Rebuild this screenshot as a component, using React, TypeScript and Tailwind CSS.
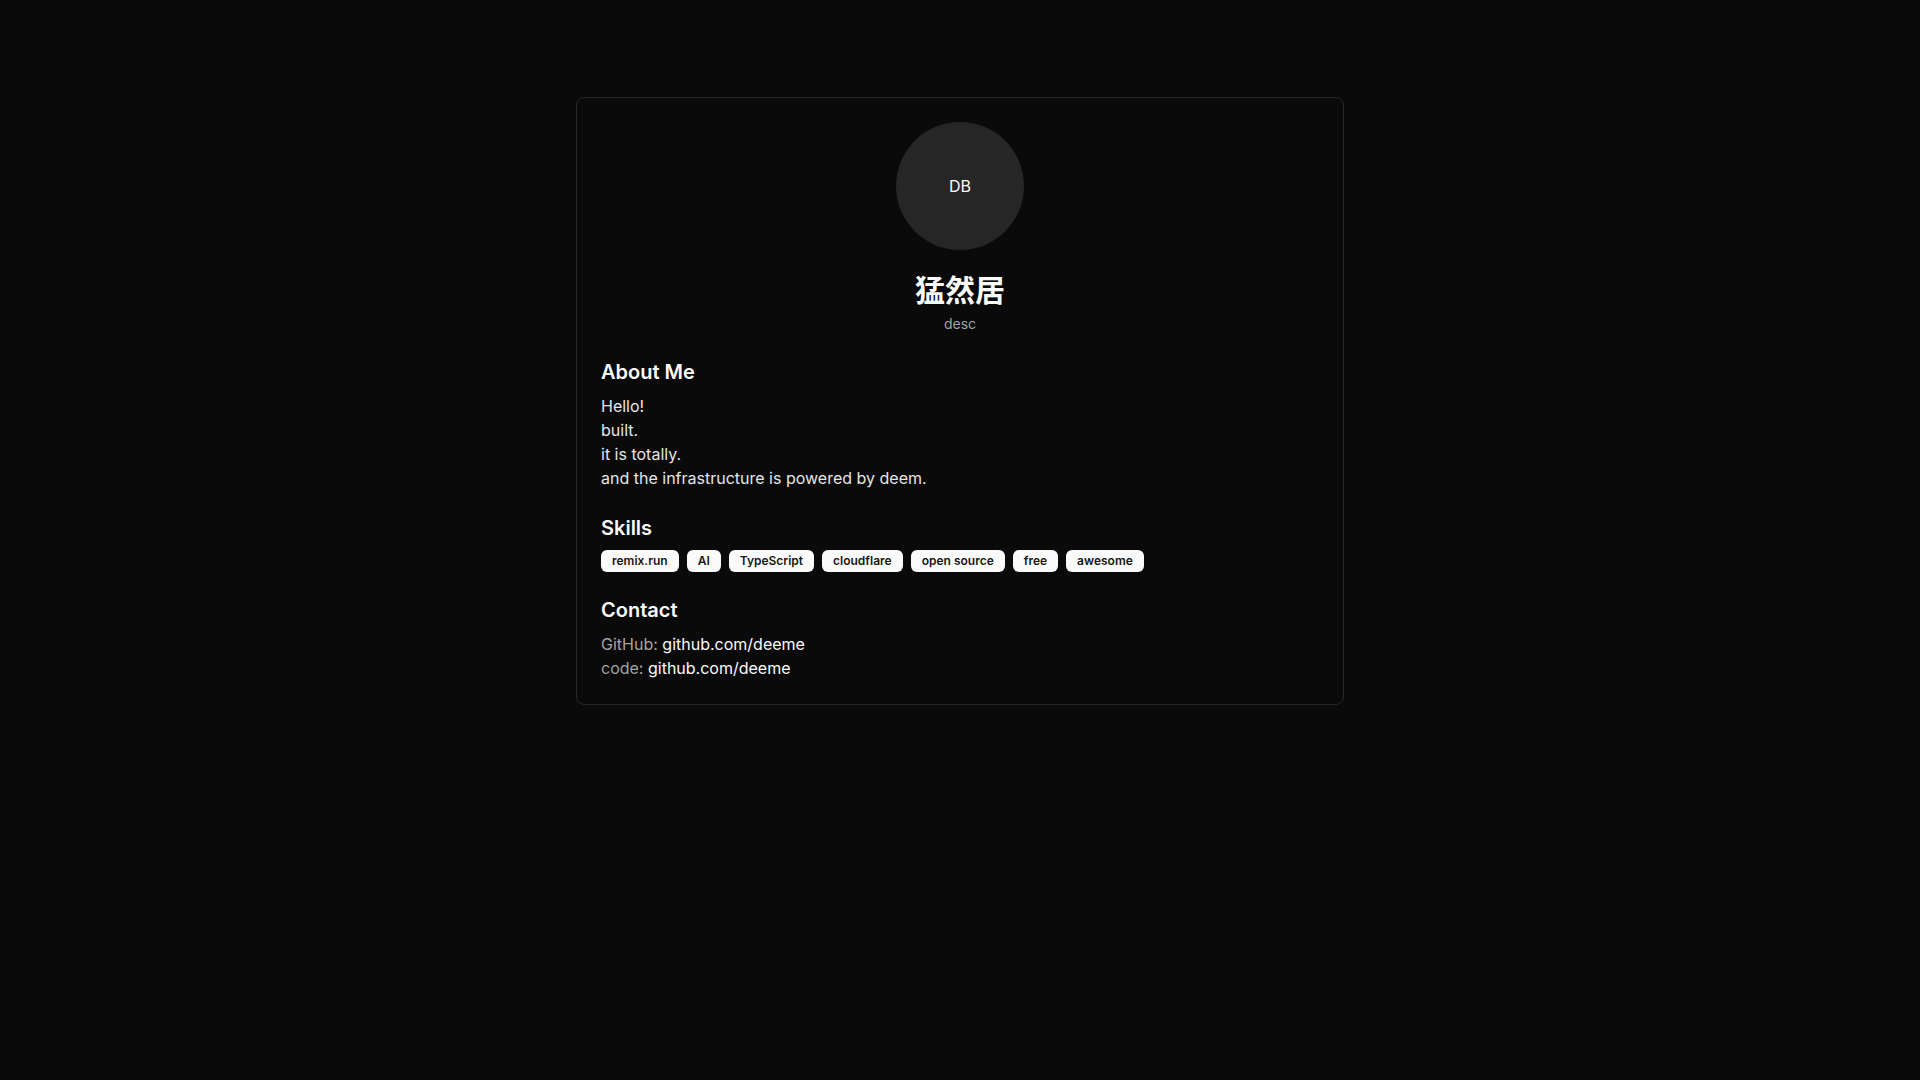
import React from "react";

const skills = ["remix.run", "AI", "TypeScript", "cloudflare", "open source", "free", "awesome"];

export default function App() {
  return (
    <div
      className="min-h-screen w-full bg-[#0a0a0a] text-[#fafafa] pt-[97px]"
      style={{ fontFamily: 'Inter, "Noto Sans CJK SC", sans-serif' }}
    >
      <div className="mx-auto w-[768px] rounded-lg border border-[#262626] bg-[#0a0a0a] p-6">
        <div className="flex flex-col items-center">
          <div className="flex h-32 w-32 items-center justify-center rounded-full bg-[#262626] text-base">
            DB
          </div>
          <h1 className="mt-[22px] text-3xl font-bold leading-9">猛然居</h1>
          <p className="mt-[6px] text-sm leading-5 text-[#a3a3a3]">desc</p>
        </div>
        <div className="mt-6 flex flex-col gap-6">
          <section>
            <h2 className="text-xl font-semibold leading-7">About Me</h2>
            <div className="mt-2 text-base leading-6 text-[#e5e5e5]">
              <p>Hello!</p>
              <p>built.</p>
              <p>it is totally.</p>
              <p>and the infrastructure is powered by deem.</p>
            </div>
          </section>
          <section>
            <h2 className="text-xl font-semibold leading-7">Skills</h2>
            <div className="mt-2 flex flex-wrap gap-2">
              {skills.map((s) => (
                <span
                  key={s}
                  className="inline-flex items-center rounded-md border border-transparent bg-[#fafafa] px-2.5 py-0.5 text-xs font-semibold leading-4 text-[#171717]"
                >
                  {s}
                </span>
              ))}
            </div>
          </section>
          <section>
            <h2 className="text-xl font-semibold leading-7">Contact</h2>
            <div className="mt-2 text-base leading-6">
              <p>
                <span className="text-[#a3a3a3]">GitHub:</span>{" "}
                <span className="text-[#fafafa]">github.com/deeme</span>
              </p>
              <p>
                <span className="text-[#a3a3a3]">code:</span>{" "}
                <span className="text-[#fafafa]">github.com/deeme</span>
              </p>
            </div>
          </section>
        </div>
      </div>
    </div>
  );
}
